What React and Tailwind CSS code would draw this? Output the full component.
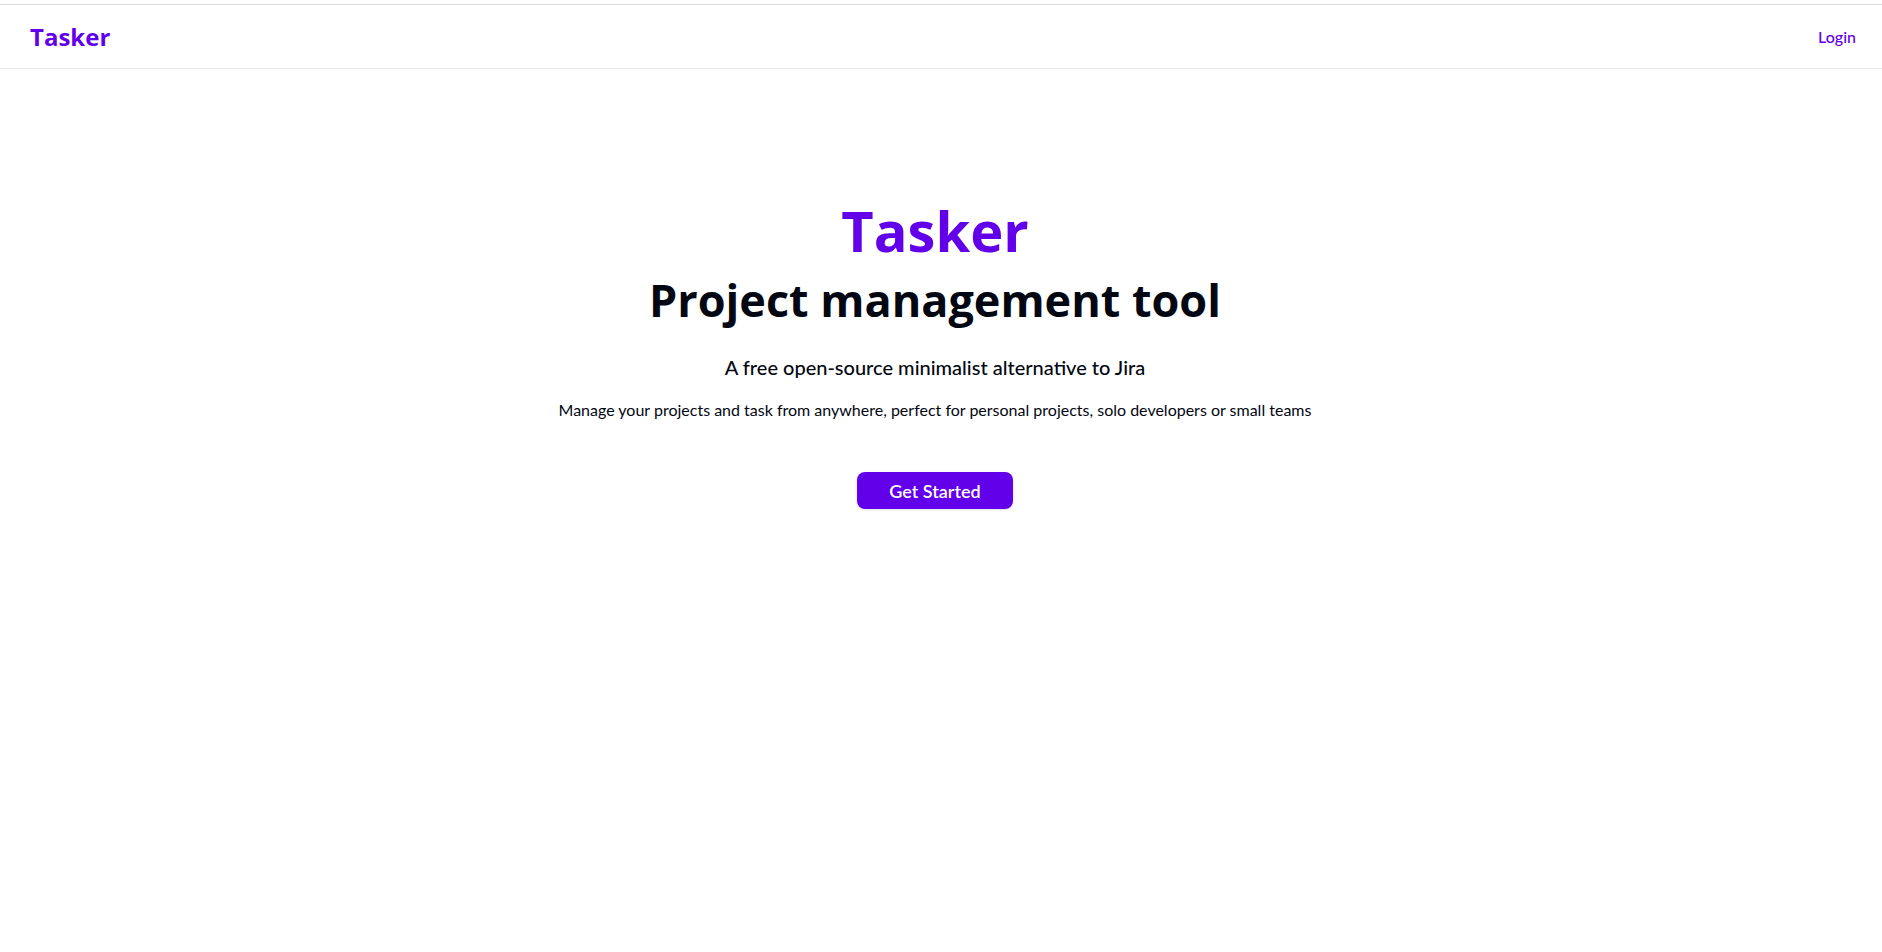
import React from "react";

const Navbar = () => {
  return (
    <div className="mt-1 border-t border-[#d9d9d9]">
      <div className="h-16 flex justify-between items-center pl-[30px] pr-[26px] border-b border-[#e5e7eb]">
        <h2 className="text-2xl font-bold font-['Open_Sans',sans-serif] text-[#6200ea]">Tasker</h2>
        <button className="text-base font-medium text-[#6200ea] cursor-pointer">
          Login
        </button>
      </div>
    </div>
  );
};

const App = () => {
  return (
    <div className="w-full min-h-screen bg-white font-['Lato',sans-serif]">
      <Navbar />
      <div className="flex flex-col items-center text-center pt-[133px] pr-3">
        <h1 className="text-[56px] leading-none font-bold font-['Open_Sans',sans-serif] text-[#6200ea]">
          Tasker
        </h1>
        <h2 className="mt-[19px] text-[45px] leading-none font-bold font-['Open_Sans',sans-serif] text-gray-950">
          Project management tool
        </h2>
        <p className="mt-[31px] text-xl font-medium text-gray-950">
          A free open-source minimalist alternative to Jira
        </p>
        <p className="mt-[17px] text-base text-gray-950">
          Manage your projects and task from anywhere, perfect for personal projects, solo developers or small teams
        </p>
        <button className="mt-[50px] h-[37px] px-8 rounded-lg bg-[#6200ea] text-white text-lg font-semibold shadow-sm cursor-pointer">
          Get Started
        </button>
      </div>
    </div>
  );
};

export default App;
